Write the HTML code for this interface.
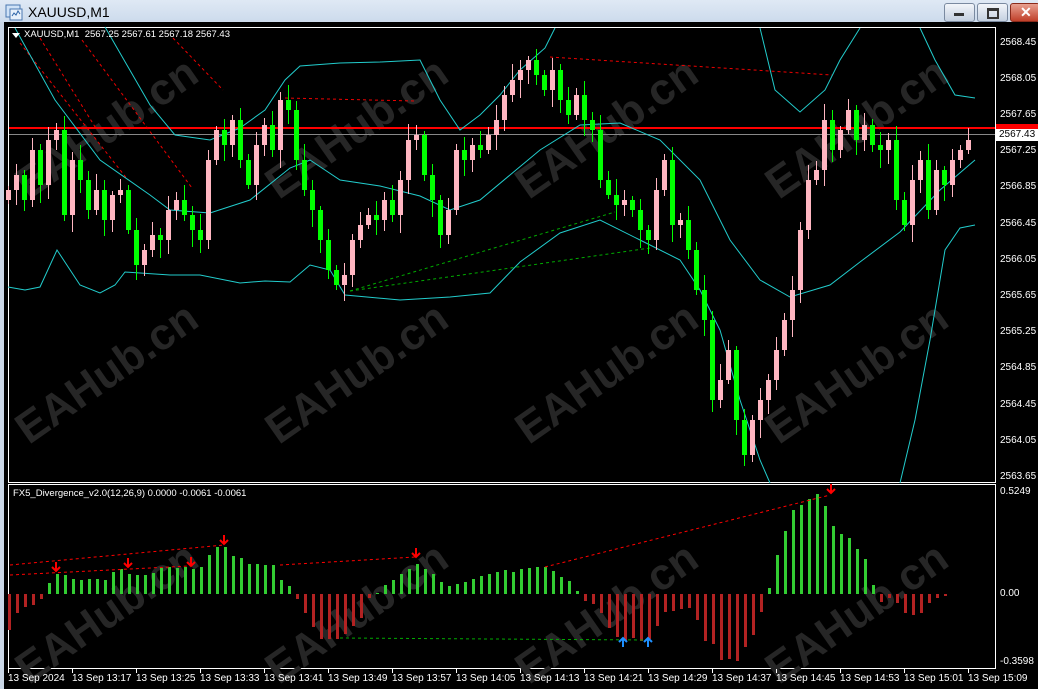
<!DOCTYPE html>
<html><head><meta charset="utf-8"><style>
html,body{margin:0;padding:0;width:1038px;height:689px;overflow:hidden;background:#000;font-family:"Liberation Sans",sans-serif}
#title{position:absolute;left:0;top:0;width:1038px;height:26px;background:linear-gradient(#dfe9f5,#c9d8ea);}
#title span{position:absolute;left:28px;top:4px;font-size:14px;color:#000}
.btn{position:absolute;top:3px;width:29px;height:17px;border:1px solid #7a8aa0;border-radius:3px;background:linear-gradient(#f2f5fa,#c4d0e0)}
#frame{position:absolute;left:0;top:22px;width:1038px;height:667px;background:#000}
.lbl{position:absolute;color:#fff;font-size:10px;line-height:12px}
.tl{position:absolute;top:673px;color:#fff;font-size:10px;line-height:12px;white-space:nowrap}
</style></head><body>
<div id="title"><svg style="position:absolute;left:5px;top:4px" width="18" height="17"><rect x="1" y="1" width="14" height="12" fill="#cfe2f7" stroke="#4a78b0"/><rect x="5" y="5" width="12" height="11" fill="#e8f1fb" stroke="#4a78b0"/><path d="M7 12 l2-3 2 2 2-4 2 3" stroke="#2d64a8" fill="none"/></svg><span>XAUUSD,M1</span>
<div class="btn" style="left:944px"><div style="position:absolute;left:9px;top:9px;width:10px;height:3px;background:#333"></div></div>
<div class="btn" style="left:977px"><div style="position:absolute;left:9px;top:4px;width:8px;height:6px;border:2px solid #333;border-top-width:3px"></div></div>
<div class="btn" style="left:1010px;width:28px;background:linear-gradient(#e8a090,#c0402a);border-color:#8a2a1a"><div style="position:absolute;left:9px;top:0px;color:#fff;font-weight:bold;font-size:14px">✕</div></div>
</div>
<div id="frame"></div>
<div style="position:absolute;left:0;top:22px;width:4px;height:667px;background:#c9d6e6"></div>
<svg id="ch" style="position:absolute;left:0;top:0" width="1038" height="689"></svg>
<div class="lbl" style="left:24px;top:29px;font-size:9.5px">XAUUSD,M1&nbsp; 2567.25 2567.61 2567.18 2567.43</div>
<div style="position:absolute;left:12px;top:33px;width:0;height:0;border-left:4px solid transparent;border-right:4px solid transparent;border-top:5px solid #fff"></div>
<div class="lbl" style="left:13px;top:488px;font-size:9.5px">FX5_Divergence_v2.0(12,26,9) 0.0000 -0.0061 -0.0061</div>
<div class="lbl" style="left:1000px;top:37px">2568.45</div>
<div class="lbl" style="left:1000px;top:73px">2568.05</div>
<div class="lbl" style="left:1000px;top:109px">2567.65</div>
<div class="lbl" style="left:1000px;top:145px">2567.25</div>
<div class="lbl" style="left:1000px;top:181px">2566.85</div>
<div class="lbl" style="left:1000px;top:218px">2566.45</div>
<div class="lbl" style="left:1000px;top:254px">2566.05</div>
<div class="lbl" style="left:1000px;top:290px">2565.65</div>
<div class="lbl" style="left:1000px;top:326px">2565.25</div>
<div class="lbl" style="left:1000px;top:362px">2564.85</div>
<div class="lbl" style="left:1000px;top:399px">2564.45</div>
<div class="lbl" style="left:1000px;top:435px">2564.05</div>
<div class="lbl" style="left:1000px;top:471px">2563.65</div>
<div style="position:absolute;left:996px;top:124px;width:42px;height:5px;background:#f00"></div>
<div style="position:absolute;left:996px;top:129px;width:40px;height:12px;background:#fff;color:#000;font-size:10px;line-height:12px;padding-left:3px">2567.43</div>
<div class="lbl" style="left:1000px;top:486px">0.5249</div>
<div class="lbl" style="left:1000px;top:588px">0.00</div>
<div class="lbl" style="left:1000px;top:656px">-0.3598</div>
<div class="tl" style="left:8px">13 Sep 2024</div>
<div class="tl" style="left:72px">13 Sep 13:17</div>
<div class="tl" style="left:136px">13 Sep 13:25</div>
<div class="tl" style="left:200px">13 Sep 13:33</div>
<div class="tl" style="left:264px">13 Sep 13:41</div>
<div class="tl" style="left:328px">13 Sep 13:49</div>
<div class="tl" style="left:392px">13 Sep 13:57</div>
<div class="tl" style="left:456px">13 Sep 14:05</div>
<div class="tl" style="left:520px">13 Sep 14:13</div>
<div class="tl" style="left:584px">13 Sep 14:21</div>
<div class="tl" style="left:648px">13 Sep 14:29</div>
<div class="tl" style="left:712px">13 Sep 14:37</div>
<div class="tl" style="left:776px">13 Sep 14:45</div>
<div class="tl" style="left:840px">13 Sep 14:53</div>
<div class="tl" style="left:904px">13 Sep 15:01</div>
<div class="tl" style="left:968px">13 Sep 15:09</div>
<script>
var s=document.getElementById('ch'),h='';
function L(x1,y1,x2,y2,c,w,d){h+='<line x1="'+x1+'" y1="'+y1+'" x2="'+x2+'" y2="'+y2+'" stroke="'+c+'" stroke-width="'+(w||1)+'"'+(d?' stroke-dasharray="'+d+'"':'')+'/>';}
function P(pts,c,d){h+='<polyline points="'+pts+'" fill="none" stroke="'+c+'" stroke-width="1"'+(d?' stroke-dasharray="'+d+'"':'')+'/>';}
h+='<rect x="8.5" y="27.5" width="987" height="455" fill="#000" stroke="#fff"/>';
h+='<rect x="8.5" y="484.5" width="987" height="184" fill="#000" stroke="#fff"/>';
var wm=[[115,385],[365,385],[615,385],[865,385],[115,140],[365,140],[615,140],[865,140],[115,625],[365,625],[615,625],[865,625]];
wm.forEach(function(p){h+='<text x="'+p[0]+'" y="'+p[1]+'" transform="rotate(-35 '+p[0]+' '+p[1]+')" font-family="Liberation Sans,sans-serif" font-size="44" font-weight="bold" fill="#262626" text-anchor="middle">EAHub.cn</text>';});
L(9,128,995,128,'#f00',2);L(9,134.5,995,134.5,'#888',1);
var rd='3,3';
L(20,43,128,180,'#e00',1,rd);L(40,38,97,130,'#e00',1,rd);L(82,40,192,188,'#e00',1,rd);L(173,38,223,90,'#e00',1,rd);
L(285,98,415,101,'#e00',1,rd);L(550,57,832,75,'#e00',1,rd);
L(350,291,615,212,'#0a0',1,rd);L(350,291,650,248,'#0a0',1,rd);
P('15,28 55,100 100,160 150,195 170,210 210,213 250,200 290,168 310,160 340,180 380,186 420,196 450,210 480,200 510,175 540,150 580,125 620,123 660,140 700,180 730,240 760,280 790,297 830,285 860,262 900,232 940,190 975,160','#2cc');
P('105,27 150,105 175,135 210,140 240,128 265,110 285,80 300,66 340,63 380,62 420,60 440,100 460,130 480,115 500,95 520,70 545,48 555,28','#2cc');
P('760,28 775,90 800,112 825,90 840,60 860,28','#2cc');P('920,28 935,60 955,95 975,98','#2cc');
P('8,287 25,290 40,287 57,250 80,285 100,293 115,285 125,272 170,275 200,275 240,283 265,281 290,282 310,265 330,270 345,295 400,300 450,297 490,293 520,262 560,233 600,220 640,240 680,260 700,290 720,330 740,400 760,460 770,483','#2cc');
P('900,483 915,420 930,340 945,250 960,228 975,225','#2cc');
var c=[190,175,200,150,185,140,130,215,160,180,210,190,220,195,190,230,265,250,235,240,210,200,215,230,240,160,130,145,120,160,185,145,125,150,100,110,160,190,210,240,270,285,275,240,225,215,220,200,215,180,140,135,175,200,235,210,150,160,145,150,135,120,95,80,70,60,75,90,70,100,115,95,120,130,180,195,205,200,210,230,240,190,160,225,220,250,290,320,400,380,350,420,455,420,400,380,350,320,290,230,180,170,120,150,130,110,140,125,145,150,140,200,225,180,160,210,170,185,160,150,140];
var o=200;
for(var i=0;i<c.length;i++){var x=8+8*i,cl=c[i],up=cl<o,col=up?'#ffb6c1':'#00ff00';
var t=Math.min(o,cl),b=Math.max(o,cl);if(b-t<2)b=t+2;
var wt=t-4-((i*7)%13),wb=b+4+((i*11)%15);
L(x+0.5,wt,x+0.5,wb,col,1);h+='<rect x="'+(x-2)+'" y="'+t+'" width="5" height="'+(b-t)+'" fill="'+col+'"/>';o=cl;}
var hv=[-36,-19,-13,-11,-5,11,20,19,15,14,15,15,14,22,25,20,19,19,21,26,27,26,27,25,27,39,47,47,38,36,30,30,29,29,14,8,-5,-19,-33,-45,-45,-45,-40,-32,-24,-4,1,9,14,20,25,30,25,20,12,8,10,12,15,18,20,22,24,22,25,26,27,27,23,17,13,3,-7,-10,-19,-34,-43,-47,-44,-47,-45,-32,-18,-17,-15,-14,-26,-47,-50,-66,-65,-67,-53,-41,-18,6,39,63,84,89,95,100,88,68,60,56,45,35,9,-8,-4,-9,-19,-21,-19,-9,-4,-2];
for(var i=0;i<hv.length;i++){var x=8+8*i,v=hv[i];h+='<rect x="'+x+'" y="'+(v>0?594-v:594)+'" width="3" height="'+Math.abs(v)+'" fill="'+(v>0?'#32cd32':'#b22222')+'"/>';}
L(10,565,224,545,'#f00',1,rd);L(10,575,190,566,'#f00',1,rd);L(280,565,415,557,'#f00',1,rd);L(545,567,830,495,'#f00',1,rd);L(340,638,645,640,'#0a0',1,rd);
[[56,570],[128,566],[191,565],[224,543],[416,556],[831,492]].forEach(function(p){h+='<path d="M'+p[0]+' '+(p[1]-8)+' v9 M'+(p[0]-4)+' '+(p[1]-3)+' l4 4 4-4" stroke="#f00" stroke-width="2" fill="none"/>';});
[[623,641],[648,641]].forEach(function(p){h+='<path d="M'+p[0]+' '+(p[1]+6)+' v-9 M'+(p[0]-4)+' '+(p[1]+1)+' l4-4 4 4" stroke="#1e90ff" stroke-width="2" fill="none"/>';});
for(var k=0;k<16;k++){L(8+64*k+0.5,669,8+64*k+0.5,673,'#fff');}
s.innerHTML=h;
</script>
</body></html>
